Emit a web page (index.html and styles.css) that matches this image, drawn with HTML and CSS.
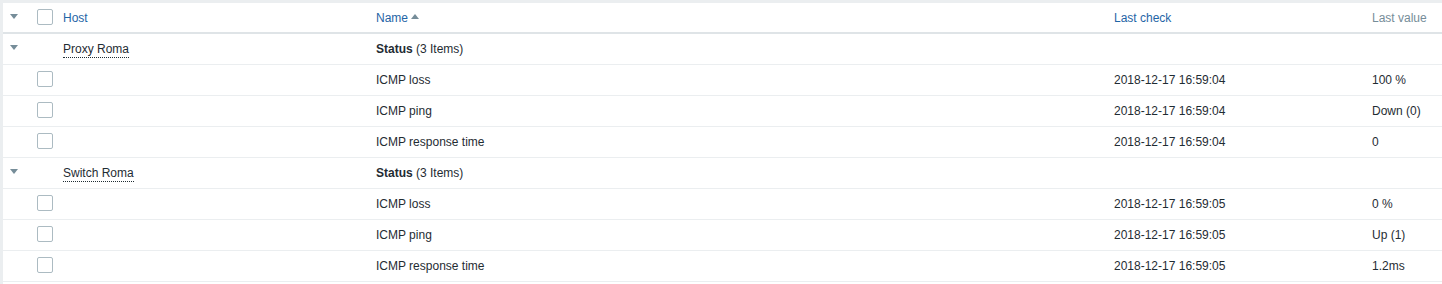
FILE: index.html
```html
<!DOCTYPE html>
<html>
<head>
    <title>Latest data</title>
    <link rel="stylesheet" href="styles.css">
</head>
<body>
    <div class="table-wrap">
    <table class="list-table">
        <colgroup>
            <col class="col-toggle">
            <col class="col-check">
            <col class="col-host">
            <col class="col-name">
            <col class="col-check-time">
            <col class="col-value">
        </colgroup>
        <thead>
            <tr>
                <th><span class="arrow-down"></span></th>
                <th><span class="checkbox"></span></th>
                <th><a class="sort-link" href="#">Host</a></th>
                <th><a class="sort-link" href="#">Name</a><span class="arrow-up"></span></th>
                <th><a class="sort-link" href="#">Last check</a></th>
                <th class="plain-head">Last value</th>
            </tr>
        </thead>
        <tbody>
            <tr>
                <td><span class="arrow-down"></span></td>
                <td></td>
                <td><span class="host-link">Proxy Roma</span></td>
                <td><b>Status</b> (3 Items)</td>
                <td></td>
                <td></td>
            </tr>
            <tr>
                <td></td>
                <td><span class="checkbox"></span></td>
                <td></td>
                <td>ICMP loss</td>
                <td>2018-12-17 16:59:04</td>
                <td>100 %</td>
            </tr>
            <tr>
                <td></td>
                <td><span class="checkbox"></span></td>
                <td></td>
                <td>ICMP ping</td>
                <td>2018-12-17 16:59:04</td>
                <td>Down (0)</td>
            </tr>
            <tr>
                <td></td>
                <td><span class="checkbox"></span></td>
                <td></td>
                <td>ICMP response time</td>
                <td>2018-12-17 16:59:04</td>
                <td>0</td>
            </tr>
            <tr>
                <td><span class="arrow-down"></span></td>
                <td></td>
                <td><span class="host-link">Switch Roma</span></td>
                <td><b>Status</b> (3 Items)</td>
                <td></td>
                <td></td>
            </tr>
            <tr>
                <td></td>
                <td><span class="checkbox"></span></td>
                <td></td>
                <td>ICMP loss</td>
                <td>2018-12-17 16:59:05</td>
                <td>0 %</td>
            </tr>
            <tr>
                <td></td>
                <td><span class="checkbox"></span></td>
                <td></td>
                <td>ICMP ping</td>
                <td>2018-12-17 16:59:05</td>
                <td>Up (1)</td>
            </tr>
            <tr>
                <td></td>
                <td><span class="checkbox"></span></td>
                <td></td>
                <td>ICMP response time</td>
                <td>2018-12-17 16:59:05</td>
                <td>1.2ms</td>
            </tr>
        </tbody>
    </table>
    </div>
</body>
</html>
```

FILE: styles.css
```css
body {
    font-family: "Liberation Sans", Arial, sans-serif;
    font-size: 12px;
    background-color: #ebeef0;
    color: #1f2c33;
    margin: 0;
    padding: 3px 0 0 3px;
    overflow: hidden;
}
.table-wrap {
    background-color: #fff;
    height: calc(100vh - 3px);
}
.list-table {
    width: 1439px;
    border-collapse: collapse;
    table-layout: fixed;
}
.col-toggle {
    width: 30px;
}
.col-check {
    width: 30px;
}
.col-host {
    width: 313px;
}
.col-name {
    width: 738px;
}
.col-check-time {
    width: 258px;
}
.col-value {
    width: 70px;
}
th {
    height: 29px;
    padding: 0;
    text-align: left;
    font-weight: normal;
    border-bottom: 2px solid #dfe4e7;
    white-space: nowrap;
}
td {
    height: 30px;
    padding: 0;
    border-bottom: 1px solid #ebeef0;
    white-space: nowrap;
}
th:first-child,
td:first-child {
    padding-left: 7px;
}
th:nth-child(2),
td:nth-child(2) {
    padding-left: 4px;
}
.sort-link {
    color: #1f65a6;
    text-decoration: none;
}
.plain-head {
    color: #768d99;
}
.host-link {
    border-bottom: 1px dotted #1f2c33;
    padding-bottom: 1px;
}
.checkbox {
    display: inline-block;
    width: 14px;
    height: 14px;
    border: 1px solid #acbbc2;
    border-radius: 2px;
    vertical-align: middle;
    margin-top: -2px;
}
.arrow-down {
    display: inline-block;
    width: 0;
    height: 0;
    border-left: 4px solid transparent;
    border-right: 4px solid transparent;
    border-top: 5px solid #768d99;
    vertical-align: middle;
    margin-top: -4px;
}
.arrow-up {
    display: inline-block;
    width: 0;
    height: 0;
    margin-left: 3px;
    border-left: 4px solid transparent;
    border-right: 4px solid transparent;
    border-bottom: 5px solid #768d99;
    vertical-align: middle;
    margin-top: -3px;
}
```
